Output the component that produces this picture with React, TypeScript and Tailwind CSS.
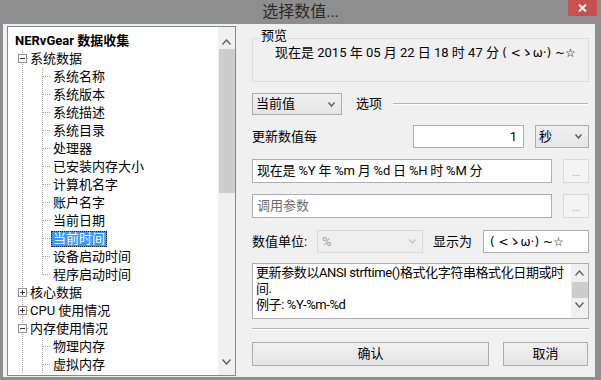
type TreeNode = {
  label: string
  level: 0 | 1 | 2
  open?: boolean
  last?: boolean
  selected?: boolean
}

const nodes: TreeNode[] = [
  { label: 'NERvGear 数据收集', level: 0 },
  { label: '系统数据', level: 1, open: true },
  { label: '系统名称', level: 2 },
  { label: '系统版本', level: 2 },
  { label: '系统描述', level: 2 },
  { label: '系统目录', level: 2 },
  { label: '处理器', level: 2 },
  { label: '已安装内存大小', level: 2 },
  { label: '计算机名字', level: 2 },
  { label: '账户名字', level: 2 },
  { label: '当前日期', level: 2 },
  { label: '当前时间', level: 2, selected: true },
  { label: '设备启动时间', level: 2 },
  { label: '程序启动时间', level: 2, last: true },
  { label: '核心数据', level: 1 },
  { label: 'CPU 使用情况', level: 1 },
  { label: '内存使用情况', level: 1, open: true },
  { label: '物理内存', level: 2 },
  { label: '虚拟内存', level: 2 },
]

const dotted = {
  stroke: '#a0a0a0',
  strokeDasharray: '1 1',
  shapeRendering: 'crispEdges' as const,
}

function Guides({ node }: { node: TreeNode }) {
  if (node.level === 1) {
    return (
      <svg width="21" height="18" className="shrink-0">
        <line x1="14.5" y1="0" x2="14.5" y2="18" {...dotted} />
        <rect x="10.5" y="4.5" width="8" height="8" fill="#fff" stroke="#919191" shapeRendering="crispEdges" />
        <line x1="12" y1="8.5" x2="17" y2="8.5" stroke="#333" shapeRendering="crispEdges" />
        {!node.open && (
          <line x1="14.5" y1="6" x2="14.5" y2="11" stroke="#333" shapeRendering="crispEdges" />
        )}
        <line x1="19" y1="8.5" x2="21" y2="8.5" {...dotted} />
      </svg>
    )
  }
  return (
    <svg width="43" height="18" className="shrink-0">
      <line x1="14.5" y1="0" x2="14.5" y2="18" {...dotted} />
      <line x1="34.5" y1="0" x2="34.5" y2={node.last ? 9 : 18} {...dotted} />
      <line x1="35" y1="8.5" x2="43" y2="8.5" {...dotted} />
    </svg>
  )
}

function Chevron({ up, color = '#606060', w = 9 }: { up?: boolean; color?: string; w?: number }) {
  const h = Math.round(w / 2) + 1
  return (
    <svg width={w} height={h} className="shrink-0">
      <path
        d={up ? `M0.5 ${h - 0.5} L${w / 2} 1 L${w - 0.5} ${h - 0.5}` : `M0.5 0.5 L${w / 2} ${h - 1} L${w - 0.5} 0.5`}
        fill="none"
        stroke={color}
        strokeWidth="1.4"
      />
    </svg>
  )
}

function Combo({ text, className, disabled }: { text: string; className: string; disabled?: boolean }) {
  return (
    <div
      className={
        disabled
          ? `flex h-full items-center border border-[#d9d9d9] bg-[#efefef] pl-[4px] pr-[6px] text-[#a0a0a0] ${className}`
          : `flex h-full items-center border border-[#acacac] bg-gradient-to-b from-[#f0f0f0] to-[#e5e5e5] pl-[3px] pr-[6px] ${className}`
      }
    >
      <span className="flex-1">{text}</span>
      <Chevron w={7} color={disabled ? '#c4c4c4' : '#5a5a5a'} />
    </div>
  )
}

function DotsButton() {
  return (
    <div className="flex h-full w-[26px] items-end justify-center border border-[#d9d9d9] bg-[#f4f4f4] pb-[4px] text-[10px] leading-[10px] text-[#9a9a9a]">
      ...
    </div>
  )
}

function Kaomoji() {
  return (
    <span className="font-['DejaVu_Sans','Noto_Sans_CJK_JP',sans-serif] text-[12px]">( &lt;ゝω·) ~☆</span>
  )
}

export default function App() {
  return (
    <div className="flex h-[380px] w-[601px] flex-col overflow-hidden bg-[#8e8e8e] font-['Roboto','Noto_Sans_CJK_SC',sans-serif] text-[13px] text-black">
      <div className="relative flex h-[24px] shrink-0 items-center justify-center">
        <span className="text-[16px] leading-[20px] text-[#2a2a2a]">选择数值...</span>
        <div className="absolute right-[4px] top-0 flex h-[16px] w-[29px] items-center justify-center bg-[#c75050]">
          <svg width="9" height="8">
            <path d="M1 0.5 L8 7.5 M8 0.5 L1 7.5" stroke="#fff" strokeWidth="1.8" />
          </svg>
        </div>
      </div>

      <div className="mb-[3px] ml-[3px] mr-[6px] flex flex-1 bg-[#f0f0f0]">
        {/* tree */}
        <div className="ml-[4px] mt-[2px] mb-[1px] flex w-[229px] border border-[#828790] bg-white">
          <div className="flex-1 overflow-hidden pt-[5px]">
            {nodes.map((n) => (
              <div key={n.label} className="flex h-[18px] items-center whitespace-nowrap leading-[18px]">
                {n.level === 0 ? (
                  <span className="pl-[7px] font-bold">{n.label}</span>
                ) : (
                  <>
                    <Guides node={n} />
                    {n.selected ? (
                      <span className="h-[16px] bg-[#3399ff] px-[2px] leading-[16px] text-white outline-1 -outline-offset-1 outline-dotted outline-[#222]">
                        {n.label}
                      </span>
                    ) : (
                      <span className={n.level === 2 ? 'px-[2px]' : 'pl-[1px]'}>{n.label}</span>
                    )}
                  </>
                )}
              </div>
            ))}
          </div>
          <div className="flex w-[17px] flex-col bg-[#f0f0f0]">
            <div className="flex h-[22px] items-end justify-center pb-[4px]">
              <Chevron up />
            </div>
            <div className="ml-[1px] h-[144px] bg-[#cdcdcd]" />
            <div className="flex-1" />
            <div className="flex h-[24px] items-center justify-center pb-[2px]">
              <Chevron />
            </div>
          </div>
        </div>

        {/* right panel */}
        <div className="ml-[16px] mt-[14px] flex w-[337px] flex-col">
          <div className="relative h-[44px] border border-[#dcdcdc]">
            <span className="absolute -top-[11px] left-[7px] bg-[#f0f0f0] px-[1px] leading-[16px]">预览</span>
            <div className="whitespace-nowrap pl-[22px] pt-[6px] leading-[16px]">
              现在是 2015 年 05 月 22 日 18 时 47 分 <Kaomoji />
            </div>
          </div>

          <div className="mt-[11px] flex h-[22px] items-center">
            <Combo text="当前值" className="w-[90px]" />
            <span className="ml-[14px]">选项</span>
            <div className="ml-[11px] mr-[1px] h-[2px] flex-1 border-t border-b border-t-[#b4b4b4] border-b-white" />
          </div>

          <div className="mt-[10px] flex h-[23px] items-center">
            <span>更新数值每</span>
            <div className="ml-auto flex h-full w-[111px] items-center justify-end border border-[#abadb3] bg-white pr-[6px]">
              1
            </div>
            <Combo text="秒" className="ml-[11px] w-[54px]" />
          </div>

          <div className="mt-[11px] flex h-[24px] gap-[11px]">
            <div className="flex flex-1 items-center border border-[#abadb3] bg-white pl-[4px] whitespace-nowrap tracking-[-0.2px]">
              现在是 %Y 年 %m 月 %d 日 %H 时 %M 分
            </div>
            <DotsButton />
          </div>

          <div className="mt-[11px] flex h-[24px] gap-[11px]">
            <div className="flex flex-1 items-center border border-[#abadb3] bg-white pl-[4px] text-[#6d6d6d]">
              调用参数
            </div>
            <DotsButton />
          </div>

          <div className="mt-[12px] flex h-[23px] items-center">
            <span className="w-[65px]">数值单位:</span>
            <Combo text="%" className="w-[106px]" disabled />
            <span className="ml-[10px]">显示为</span>
            <div className="ml-auto flex h-full w-[106px] items-center border border-[#abadb3] bg-white pl-[6px] whitespace-nowrap">
              <Kaomoji />
            </div>
          </div>

          <div className="mt-[10px] flex h-[56px] border border-[#abadb3] bg-white">
            <div className="flex-1 overflow-hidden whitespace-nowrap pl-[3px] pt-[1px] leading-[16px] tracking-[-0.4px]">
              <div>更新参数以ANSI strftime()格式化字符串格式化日期或时</div>
              <div>间.</div>
              <div>例子: %Y-%m-%d</div>
            </div>
            <div className="flex w-[17px] flex-col bg-[#f0f0f0]">
              <div className="flex h-[18px] items-center justify-center">
                <Chevron up />
              </div>
              <div className="ml-[1px] h-[16px] bg-[#cdcdcd]" />
              <div className="flex h-[14px] items-center justify-center">
                <Chevron />
              </div>
            </div>
          </div>

          <div className="mt-[9px] h-[2px] border-t border-b border-t-[#b4b4b4] border-b-white" />

          <div className="mt-[12px] flex h-[24px] gap-[14px]">
            <div className="flex w-[237px] items-center justify-center border border-[#acacac] bg-gradient-to-b from-[#f0f0f0] to-[#e5e5e5]">
              确认
            </div>
            <div className="flex w-[85px] items-center justify-center border border-[#acacac] bg-gradient-to-b from-[#f0f0f0] to-[#e5e5e5]">
              取消
            </div>
          </div>
        </div>
      </div>
    </div>
  )
}
